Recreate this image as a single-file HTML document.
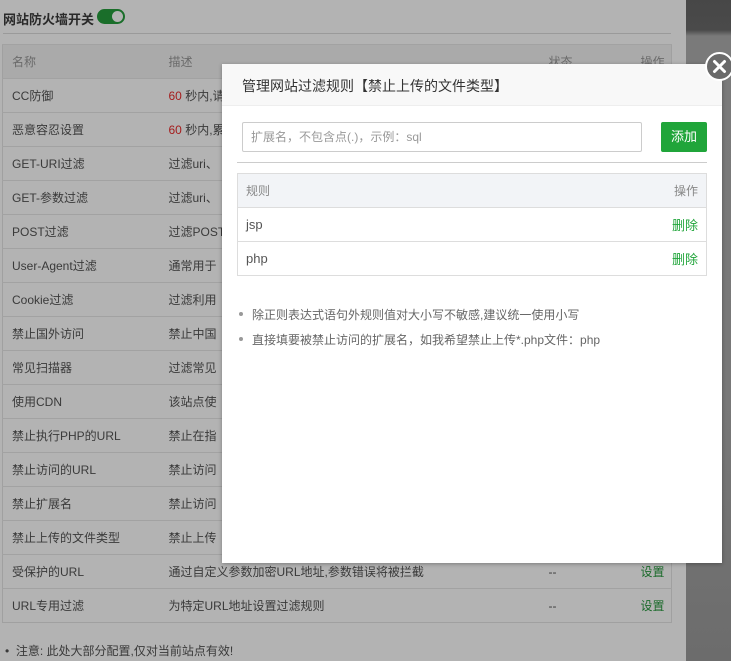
<!DOCTYPE html>
<html><head><meta charset="utf-8">
<style>
*{margin:0;padding:0;box-sizing:border-box}
body{width:731px;height:661px;overflow:hidden;position:relative;background:#b3b3b3;font-family:"Liberation Sans","Noto Sans CJK SC",sans-serif;font-size:12px;color:#3a3a3a}
.rside{position:absolute;left:686px;top:0;width:45px;height:661px;background:linear-gradient(#474747 0,#4a4a4a 30px,#7a7a7a 36px,#787878 400px,#6c6c6c 661px)}
.top{position:absolute;left:0;top:0;width:686px;height:34px;}
.top .t{position:absolute;left:3px;top:9px;font-size:13px;color:#2a2a2a;font-weight:bold}
.sw{position:absolute;left:97px;top:9px;width:28px;height:15px;border-radius:8px;background:#1a6e2a}
.sw:after{content:"";position:absolute;right:2px;top:2px;width:11px;height:11px;border-radius:50%;background:#b3b3b3}
.hr{position:absolute;left:3px;top:33px;width:668px;height:1px;background:#9a9a9a}
table.bg{position:absolute;left:2px;top:44px;width:670px;border-collapse:collapse;border:1px solid #a0a0a0}
table.bg td{height:34px;border-top:1px solid #a2a2a2;padding-left:9px;white-space:nowrap;color:#3a3a3a}
table.bg tr.h td{background:#aaaaaa;color:#6a6a6a;height:34px}
.red{color:#a51c1c}
table.bg td.g{color:#1a6a2a}
.note{position:absolute;left:5px;top:642px;color:#3a3a3a}
.modal{position:absolute;left:222px;top:64px;width:500px;height:499px;background:#fff;box-shadow:0 1px 4px rgba(0,0,0,.3)}
.mh{height:42px;background:#f8f8f8;border-bottom:1px solid #eee;padding-left:20px;line-height:44px;font-size:14px;color:#333}
.close{position:absolute;left:705px;top:52px;width:29px;height:29px;border-radius:50%;background:#6a6a6a;border:2px solid #fff;}
.inp{position:absolute;left:20px;top:58px;width:400px;height:30px;border:1px solid #ccc;border-radius:2px;padding-left:8px;line-height:28px;color:#999;font-size:12px}
.btn{position:absolute;left:439px;top:58px;width:46px;height:30px;background:#20a53a;border-radius:2px;color:#fff;text-align:center;line-height:30px;font-size:13px}
.sep{position:absolute;left:15px;top:98px;width:470px;height:1px;background:#ccc}
table.r{position:absolute;left:15px;top:109px;width:470px;border-collapse:collapse;border:1px solid #ddd}
table.r td{height:34px;border-top:1px solid #ddd;padding:0 8px;font-size:13px;color:#555}
table.r tr.h td{background:#f2f4f7;color:#888;font-size:12px}
table.r td.o{text-align:right}
table.r td.gr{color:#20a53a}
ul{position:absolute;left:30px;top:242px;color:#666;font-size:12px;list-style:none}
ul li{height:25px;position:relative}
ul li:before{content:"";position:absolute;left:-13px;top:6px;width:4px;height:4px;border-radius:50%;background:#999}
</style></head><body>
<div class="rside"></div>
<div class="top"><span class="t">网站防火墙开关</span><div class="sw"></div></div>
<div class="hr"></div>
<table class="bg">
<tr class="h"><td style="width:157px">名称</td><td>描述</td><td style="width:92px">状态</td><td style="width:40px">操作</td></tr>
<tr><td>CC防御</td><td><span class="red">60</span> 秒内,请</td><td></td><td></td></tr>
<tr><td>恶意容忍设置</td><td><span class="red">60</span> 秒内,累</td><td></td><td></td></tr>
<tr><td>GET-URI过滤</td><td>过滤uri、</td><td></td><td></td></tr>
<tr><td>GET-参数过滤</td><td>过滤uri、</td><td></td><td></td></tr>
<tr><td>POST过滤</td><td>过滤POST</td><td></td><td></td></tr>
<tr><td>User-Agent过滤</td><td>通常用于</td><td></td><td></td></tr>
<tr><td>Cookie过滤</td><td>过滤利用</td><td></td><td></td></tr>
<tr><td>禁止国外访问</td><td>禁止中国</td><td></td><td></td></tr>
<tr><td>常见扫描器</td><td>过滤常见</td><td></td><td></td></tr>
<tr><td>使用CDN</td><td>该站点使</td><td></td><td></td></tr>
<tr><td>禁止执行PHP的URL</td><td>禁止在指</td><td></td><td></td></tr>
<tr><td>禁止访问的URL</td><td>禁止访问</td><td></td><td></td></tr>
<tr><td>禁止扩展名</td><td>禁止访问</td><td></td><td></td></tr>
<tr><td>禁止上传的文件类型</td><td>禁止上传</td><td></td><td></td></tr>
<tr><td>受保护的URL</td><td>通过自定义参数加密URL地址,参数错误将被拦截</td><td>--</td><td class="g">设置</td></tr>
<tr><td>URL专用过滤</td><td>为特定URL地址设置过滤规则</td><td>--</td><td class="g">设置</td></tr>
</table>
<div class="note">• &nbsp;注意: 此处大部分配置,仅对当前站点有效!</div>
<div class="modal">
<div class="mh">管理网站过滤规则【禁止上传的文件类型】</div>
<div class="inp">扩展名，不包含点(.)，示例：sql</div>
<div class="btn">添加</div>
<div class="sep"></div>
<table class="r">
<tr class="h"><td>规则</td><td class="o">操作</td></tr>
<tr><td>jsp</td><td class="o gr">删除</td></tr>
<tr><td>php</td><td class="o gr">删除</td></tr>
</table>
<ul><li>除正则表达式语句外规则值对大小写不敏感,建议统一使用小写</li><li>直接填要被禁止访问的扩展名，如我希望禁止上传*.php文件：php</li></ul>
</div>
<div class="close"><svg width="25" height="25" viewBox="0 0 25 25"><path d="M7.5 7.5L17.5 17.5M17.5 7.5L7.5 17.5" stroke="#fff" stroke-width="3" stroke-linecap="round"/></svg></div>
</body></html>
